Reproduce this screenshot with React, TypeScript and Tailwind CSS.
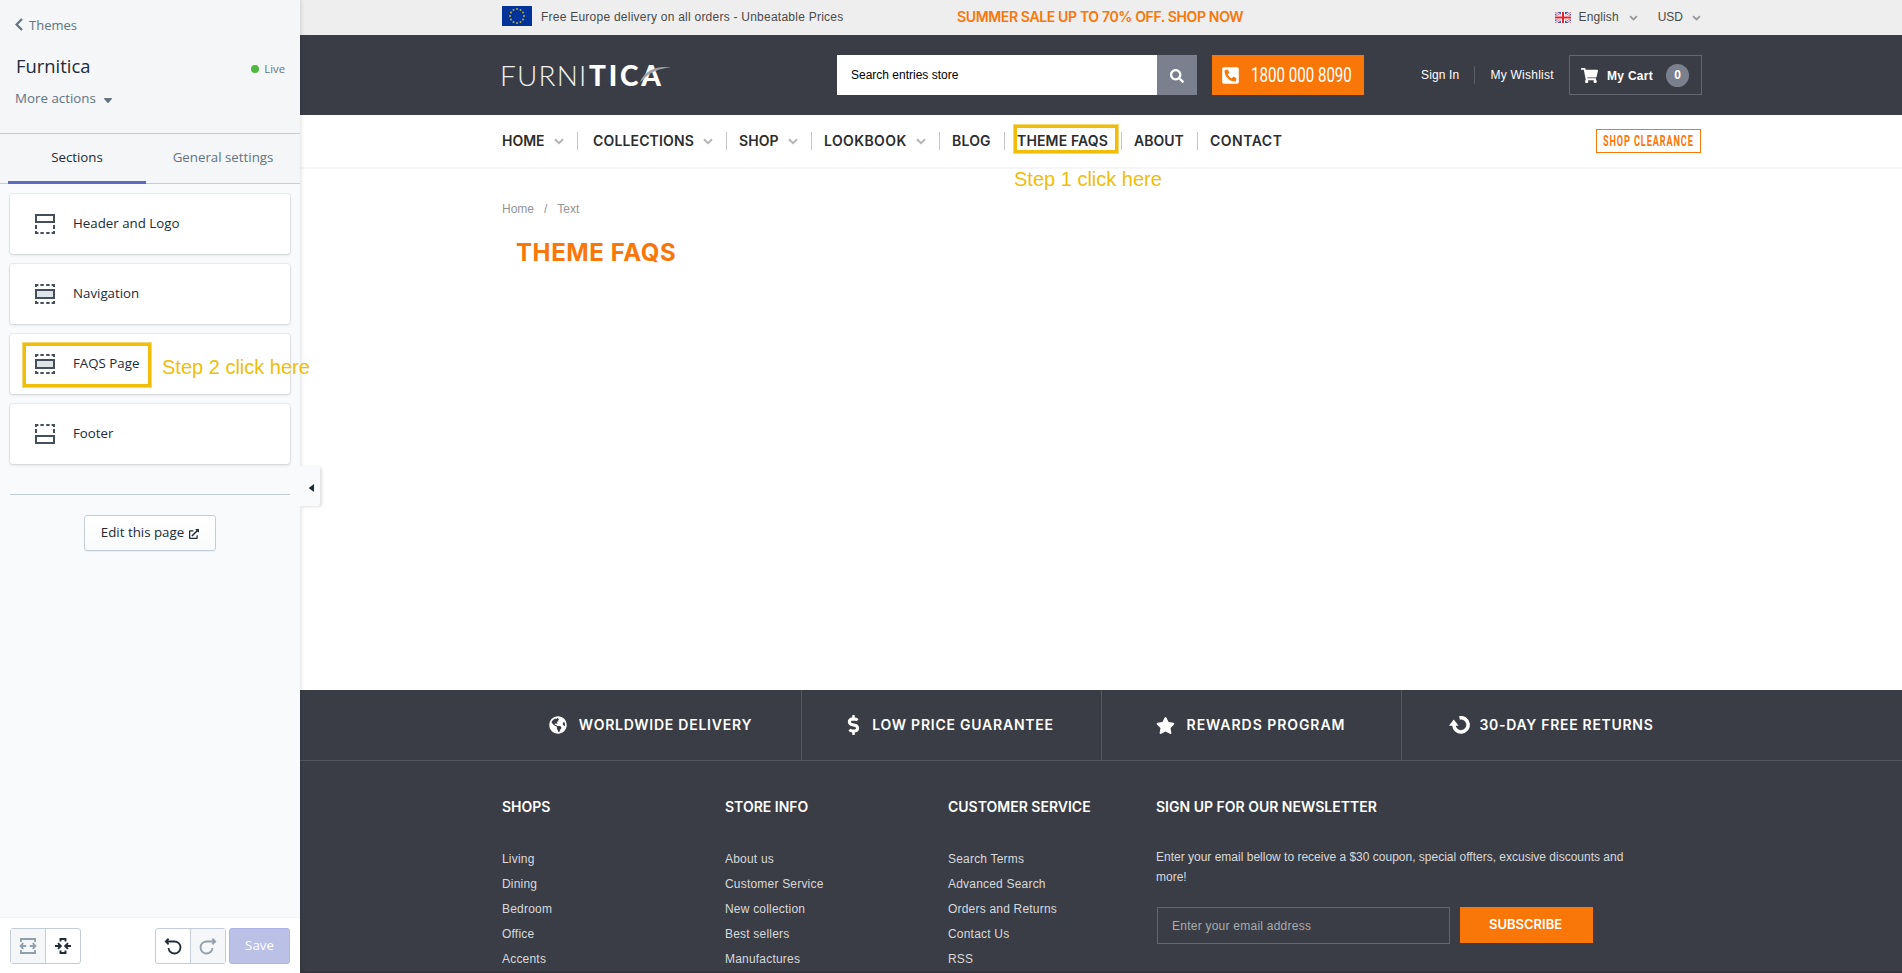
import type { ReactNode } from "react";
import {
  FaDollarSign,
  FaExternalLinkAlt,
  FaGlobeAmericas,
  FaPhoneSquareAlt,
  FaSearch,
  FaShoppingCart,
  FaStar,
} from "react-icons/fa";

function Chevron({ className }: { className: string }) {
  return (
    <svg viewBox="0 0 10 7" className={className} fill="none" stroke="currentColor" strokeWidth="2">
      <path d="M1 1.2 5 5.2 9 1.2" />
    </svg>
  );
}

/* ---------- editor sidebar ---------- */

type SectionKind = "header" | "body" | "footer";

function SectionIcon({ kind }: { kind: SectionKind }) {
  return (
    <svg viewBox="0 0 20 20" className="size-5 text-[#454f5b]" fill="none" stroke="currentColor" strokeWidth="2">
      {kind === "header" && (
        <>
          <rect x="1" y="1" width="18" height="7" />
          <path d="M1 11v4M19 11v4M1 17v2h2.4M5.4 19h3.4M11.2 19h3.4M16.6 19H19v-2" />
        </>
      )}
      {kind === "body" && (
        <>
          <rect x="1" y="6" width="18" height="8" fill="#dfe4e8" />
          <path d="M1 3V1h2.4M5.4 1h3.4M11.2 1h3.4M16.6 1H19v2M1 17v2h2.4M5.4 19h3.4M11.2 19h3.4M16.6 19H19v-2" />
        </>
      )}
      {kind === "footer" && (
        <>
          <rect x="1" y="12" width="18" height="7" />
          <path d="M1 9V5M19 9V5M1 3V1h2.4M5.4 1h3.4M11.2 1h3.4M16.6 1H19v2" />
        </>
      )}
    </svg>
  );
}

const sections: { label: string; kind: SectionKind }[] = [
  { label: "Header and Logo", kind: "header" },
  { label: "Navigation", kind: "body" },
  { label: "FAQS Page", kind: "body" },
  { label: "Footer", kind: "footer" },
];

function Sidebar() {
  return (
    <aside className="relative z-10 flex h-full w-[300px] shrink-0 flex-col bg-[#f9fafb] font-['Open_Sans',sans-serif] text-[13.3px] text-[#212b36] shadow-[0_0_5px_rgba(0,0,0,0.18)]">
      <div className="h-[134px] border-b border-[#c4cdd5] bg-[#f4f6f8] text-[#637381]">
        <div className="flex h-[50px] items-center pl-[15px]">
          <svg viewBox="0 0 8 13" className="mb-0.5 h-[13px] w-2" fill="none" stroke="currentColor" strokeWidth="2.2">
            <path d="M7 1 1.6 6.5 7 12" />
          </svg>
          <span className="ml-1.5 pt-0.5 text-[13px]">Themes</span>
        </div>
        <div className="flex h-8 items-center justify-between pr-[15px] pl-4">
          <span className="text-[18.4px] text-[#212b36]">Furnitica</span>
          <span className="flex items-center gap-[5px] pt-1.5 text-[11.3px]">
            <span className="size-2 rounded-full bg-[#50b83c]" />
            Live
          </span>
        </div>
        <div className="flex h-8 items-center gap-2 pt-0.5 pl-[15px]">
          <span className="tracking-[0.02px]">More actions</span>
          <svg viewBox="0 0 8 5" className="mt-0.5 h-[5px] w-2" fill="currentColor">
            <path d="M.3 0h7.4L8 .8 4.6 4.7a.8.8 0 0 1-1.2 0L0 .8z" />
          </svg>
        </div>
      </div>
      <div className="flex h-[50px] border-b border-[#c4cdd5] bg-[#f4f6f8] px-2">
        <div className="-mb-px flex w-[138px] items-center justify-center border-b-[3px] border-[#5c6ac4] pb-0">Sections</div>
        <div className="flex flex-1 items-center justify-center pl-2 pb-0.5 text-[#637381]">General settings</div>
      </div>
      <div className="flex flex-col gap-2.5 px-2.5 pt-2.5">
        {sections.map((s) => (
          <div
            key={s.label}
            className="flex h-[60px] items-center rounded-[3px] bg-white pl-[25px] shadow-[0_0_0_1px_rgba(63,63,68,0.06),0_1px_3px_rgba(63,63,68,0.18)]"
          >
            <SectionIcon kind={s.kind} />
            <span className="ml-[18px]">{s.label}</span>
          </div>
        ))}
      </div>
      <div className="mx-2.5 mt-[30px] border-t border-[#c4cdd5]" />
      <div className="mt-5 flex justify-center">
        <button className="flex h-9 w-[132px] items-center justify-center gap-[5px] rounded-[3px] border border-[#c4cdd5] bg-linear-to-b from-white to-[#f9fafb] shadow-[0_1px_0_rgba(22,29,37,0.05)]">
          Edit this page
          <FaExternalLinkAlt className="mt-0.5 size-2.5" />
        </button>
      </div>
      <div className="mt-auto flex h-14 items-center border-t border-[#f1f3f5] bg-white px-2.5">
        <div className="flex h-9 w-[71px] rounded-[3px] border border-[#c4cdd5]">
          <span className="flex w-[35px] items-center justify-center border-r border-[#c4cdd5] bg-[#f4f6f8] text-[#919eab]">
            <svg viewBox="0 0 18 18" className="size-[18px]" fill="none" stroke="currentColor" strokeWidth="1.8">
              <path d="M1.9 5V2h14.2v3M1.9 13v3h14.2v-3M1.5 9h5.7M10.8 9h5.7M4.3 6.2 1.5 9l2.8 2.8M13.7 6.2 16.5 9l-2.8 2.8" />
            </svg>
          </span>
          <span className="flex flex-1 items-center justify-center text-[#212b36]">
            <svg viewBox="0 0 18 18" className="size-[18px]" fill="none" stroke="currentColor" strokeWidth="1.9">
              <path d="M6.5 4.500V2h5v2.500M6.500 13.500V16h5v-2.500M1 9h5.300M17 9h-5.300M4 6.200 6.800 9 4 11.800M14 6.200 11.200 9l2.800 2.800" />
            </svg>
          </span>
        </div>
        <div className="ml-[74px] flex h-9 w-[71px] rounded-[3px] border border-[#c4cdd5]">
          <span className="flex w-[35px] items-center justify-center border-r border-[#c4cdd5] text-[#212b36]">
            <svg viewBox="0 0 18 18" className="size-[18px]" fill="none" stroke="currentColor" strokeWidth="1.8">
              <path d="M2 4.500h8.500a6 6 0 1 1-6 6.500M4.600 1.700 1.800 4.500l2.800 2.800" />
            </svg>
          </span>
          <span className="flex flex-1 items-center justify-center bg-[#f4f6f8] text-[#919eab]">
            <svg viewBox="0 0 18 18" className="size-[18px]" fill="none" stroke="currentColor" strokeWidth="1.8">
              <path d="M16 4.500H7.500a6 6 0 1 0 6 6.500M13.400 1.700l2.800 2.800-2.800 2.800" />
            </svg>
          </span>
        </div>
        <button className="ml-[3px] h-9 w-[61px] rounded-[3px] border border-[#aeb4e3] bg-[#bac0e6] font-medium text-white">
          Save
        </button>
      </div>
      <div className="absolute top-[466px] left-[300px] flex h-10 w-5 items-center justify-center rounded-r-[3px] bg-[#f9fafb] pl-[3px] shadow-[2px_1px_3px_rgba(0,0,0,0.12)]">
        <svg viewBox="0 0 5 8" className="mt-1 h-2 w-[5px]" fill="#212b36">
          <path d="M5 0v8L.3 4.600a.8.8 0 0 1 0-1.200z" />
        </svg>
      </div>
    </aside>
  );
}

/* ---------- storefront ---------- */

function Container({ className, children }: { className: string; children: ReactNode }) {
  return <div className={`ml-[202px] flex w-[1200px] ${className}`}>{children}</div>;
}

const stars = Array.from({ length: 12 }, (_, i) => {
  const a = (i * Math.PI) / 6;
  return { x: 15 + 7 * Math.sin(a), y: 10 - 7 * Math.cos(a) };
});

function EuFlag() {
  return (
    <svg viewBox="0 0 30 20" className="h-5 w-[30px]">
      <rect width="30" height="20" rx="0.5" fill="#039" />
      {stars.map((s, i) => (
        <rect key={i} x={s.x - 0.8} y={s.y - 0.8} width="1.6" height="1.6" fill="#d9c41c" />
      ))}
    </svg>
  );
}

function UkFlag() {
  return (
    <svg viewBox="0 0 16 11" className="h-[11px] w-4">
      <rect width="16" height="11" fill="#3c5aa8" />
      <path d="M0 0 16 11M16 0 0 11" stroke="#fff" strokeWidth="2.4" />
      <path d="M0 0 16 11M16 0 0 11" stroke="#e0566a" strokeWidth="0.9" />
      <path d="M8 0v11M0 5.5h16" stroke="#fff" strokeWidth="4" />
      <path d="M8 0v11M0 5.5h16" stroke="#e8222e" strokeWidth="2" />
    </svg>
  );
}

function Logo() {
  return (
    <div className="relative flex w-[169px] items-center leading-none text-white">
      <span className="-ml-0.5 w-[89px] font-['Lato',sans-serif] text-[28px] font-light tracking-[1.2px] text-[#f0f1f2]">FURNI</span>
      <span className="font-['Lato',sans-serif] text-[28px] font-black tracking-[2.8px]">TICA</span>
      <svg viewBox="0 0 34 20" className="absolute top-[3px] right-0 h-5 w-[34px]">
        <path d="M3 18C7 8 17 1.5 34 3.3 22 4.5 14 8.5 10 12 7 14.6 5 17 3 18z" fill="#9ea1a7" />
      </svg>
    </div>
  );
}

const nav = [
  { label: "HOME", menu: true, box: "w-[91px]", gap: "mr-[15px]", text: "tracking-[0px]" },
  { label: "COLLECTIONS", menu: true, box: "w-[146px]", gap: "mr-3", text: "tracking-[0.15px]" },
  { label: "SHOP", menu: true, box: "w-[85px]", gap: "mr-3", text: "tracking-[0.1px]" },
  { label: "LOOKBOOK", menu: true, box: "w-[128px]", gap: "mr-3", text: "tracking-[0.4px]" },
  { label: "BLOG", menu: false, box: "w-[65px]", gap: "mr-3", text: "tracking-[0.2px]" },
  { label: "THEME FAQS", menu: false, box: "w-[117px]", gap: "mr-3", text: "tracking-[0.15px]" },
  { label: "ABOUT", menu: false, box: "w-[76px]", gap: "mr-3", text: "" },
  { label: "CONTACT", menu: false, box: "w-[76px]", gap: "", text: "tracking-[0.5px]" },
];

function StoreHeader() {
  return (
    <header>
      <div className="h-[35px] bg-[#eee] text-xs text-[#4a4a4a]">
        <Container className="h-[34px] items-center">
          <span className="mb-2 block h-5 pt-[3px]">
            <EuFlag />
          </span>
          <span className="ml-[9px] w-[416px] tracking-[0.24px]">Free Europe delivery on all orders - Unbeatable Prices</span>
          <span className="font-['Inter',sans-serif] text-sm font-semibold tracking-[-0.36px] text-[#f97609]">
            SUMMER SALE UP TO 70% OFF. SHOP NOW
          </span>
          <span className="ml-auto flex items-center pr-px">
            <UkFlag />
            <span className="ml-2 tracking-[0.1px]">English</span>
            <Chevron className="mt-0.5 ml-[10px] h-1.5 w-[9px] text-[#999]" />
            <span className="ml-5">USD</span>
            <Chevron className="mt-0.5 ml-[9px] h-1.5 w-[9px] text-[#999]" />
          </span>
        </Container>
      </div>
      <div className="h-20 bg-[#3a3d45] text-xs text-white">
        <Container className="h-20 items-center">
          <Logo />
          <div className="ml-[166px] flex h-10 w-80 items-center bg-white pl-3.5 text-black">Search entries store</div>
          <div className="flex size-10 items-center justify-center bg-[#7b808e]">
            <FaSearch className="mt-0.5 size-3.5" />
          </div>
          <div className="ml-[15px] flex h-10 w-[152px] items-center bg-[#f97609] pl-[9px]">
            <FaPhoneSquareAlt className="size-[19px]" />
            <span className="ml-[11px] w-[102px] origin-left scale-x-[0.755] font-['Roboto',sans-serif] text-[20px] whitespace-nowrap">
              1800 000 8090
            </span>
          </div>
          <span className="ml-[57px] tracking-[0.15px]">Sign In</span>
          <span className="ml-[15px] h-[18px] w-px bg-[#5b5e66]" />
          <span className="ml-[15px] tracking-[0.25px]">My Wishlist</span>
          <div className="ml-auto flex h-10 w-[133px] items-center border border-[#63666e] pl-[11px]">
            <FaShoppingCart className="size-[17px]" />
            <span className="ml-[9px] pt-px font-bold tracking-[0.3px]">My Cart</span>
            <span className="ml-[13px] flex size-[23px] items-center justify-center rounded-full bg-[#7b808e] font-bold">0</span>
          </div>
        </Container>
      </div>
      <nav className="h-[54px] border-b-2 border-[#f6f6f6] bg-white font-['Inter',sans-serif] text-sm font-semibold text-[#2d2d2d]">
        <Container className="h-[52px] items-center">
          {nav.map((n, i) => (
            <div key={n.label} className={`flex items-center ${n.box}`}>
              <span className={`whitespace-nowrap ${n.text}`}>{n.label}</span>
              {n.menu && <Chevron className="ml-[9px] h-[7px] w-2.5 text-[#b5b5b5]" />}
              {i < nav.length - 1 && <span className={`ml-auto h-[18px] w-px bg-[#c4c4c4] ${n.gap}`} />}
            </div>
          ))}
          <div className="mr-px ml-auto h-6 w-[105px] border border-[#f97609] pl-1.5 font-['Roboto',sans-serif] leading-[22px] font-bold text-[#f97609]">
            <span className="inline-block origin-left scale-x-[0.65] tracking-[1.4px] whitespace-nowrap">SHOP CLEARANCE</span>
          </div>
        </Container>
      </nav>
    </header>
  );
}

function ReturnIcon() {
  return (
    <svg viewBox="0 0 21 18" className="h-[18px] w-[21px]" fill="none">
      <path d="M10.5 1.900A7.100 7.100 0 1 1 4.900 9" stroke="currentColor" strokeWidth="3.600" />
      <path d="M0 9.800 4.800 3.600 9.600 9.800z" fill="currentColor" />
    </svg>
  );
}

const perks = [
  { label: "WORLDWIDE DELIVERY", icon: <FaGlobeAmericas className="size-[18px]" />, text: "tracking-[0.75px]" },
  { label: "LOW PRICE GUARANTEE", icon: <FaDollarSign className="h-5 w-[13px]" />, text: "tracking-[0.77px]" },
  { label: "REWARDS PROGRAM", icon: <FaStar className="size-[19px]" />, text: "tracking-[0.95px]" },
  { label: "30-DAY FREE RETURNS", icon: <ReturnIcon />, text: "-ml-0.5 tracking-[0.7px]" },
];

const columns = [
  { title: "SHOPS", width: "w-[223px]", links: ["Living", "Dining", "Bedroom", "Office", "Accents"] },
  {
    title: "STORE INFO",
    width: "w-[223px]",
    links: ["About us", "Customer Service", "New collection", "Best sellers", "Manufactures"],
  },
  {
    title: "CUSTOMER SERVICE",
    width: "w-[208px]",
    links: ["Search Terms", "Advanced Search", "Orders and Returns", "Contact Us", "RSS"],
  },
];

function Heading({ children }: { children: ReactNode }) {
  return <h3 className="h-6 font-['Inter',sans-serif] text-sm leading-6 font-semibold text-white">{children}</h3>;
}

function StoreFooter() {
  return (
    <footer className="mt-auto h-[283px] overflow-hidden border-b-2 border-[#35343f] bg-[#3a3d45] text-xs text-[#d9d9db]">
      <div className="border-b border-[#555966]">
        <Container className="h-[70px]">
          {perks.map((p, i) => (
            <div
              key={p.label}
              className={`flex w-[300px] items-center justify-center gap-3 pr-0.5 font-['Inter',sans-serif] text-sm font-semibold text-white ${i < 3 ? "border-r border-[#555966]" : ""}`}
            >
              {p.icon}
              <span className={p.text}>{p.label}</span>
            </div>
          ))}
        </Container>
      </div>
      <Container className="pt-[34px]">
        {columns.map((c) => (
          <div key={c.title} className={c.width}>
            <Heading>{c.title}</Heading>
            <ul className="mt-7 leading-[25px] tracking-[0.2px]">
              {c.links.map((l) => (
                <li key={l}>{l}</li>
              ))}
            </ul>
          </div>
        ))}
        <div className="flex-1">
          <Heading>SIGN UP FOR OUR NEWSLETTER</Heading>
          <p className="mt-7 w-[480px] leading-5">
            Enter your email bellow to receive a $30 coupon, special offters, excusive discounts and more!
          </p>
          <div className="mt-5 flex gap-2.5 pl-px">
            <div className="flex h-[37px] w-[293px] items-center border border-[#63666e] pl-[14px] tracking-[0.24px] text-[#a9abaf]">
              Enter your email address
            </div>
            <button className="h-9 w-[133px] bg-[#f97609] pr-0.5 font-['Inter',sans-serif] text-[13px] font-semibold text-white">
              SUBSCRIBE
            </button>
          </div>
        </div>
      </Container>
    </footer>
  );
}

function StoreFront() {
  return (
    <div className="flex h-full flex-1 flex-col bg-white">
      <StoreHeader />
      <Container className="flex-col">
        <div className="mt-[30px] flex h-5 items-center gap-2.5 text-xs text-[#949494]">
          <span>Home</span>
          <span>/</span>
          <span>Text</span>
        </div>
        <h1 className="mt-3.5 ml-3.5 font-['Inter',sans-serif] text-2xl leading-10 font-bold tracking-[0.6px] text-[#f97609]">
          THEME FAQS
        </h1>
      </Container>
      <StoreFooter />
    </div>
  );
}

/* ---------- tutorial annotations ---------- */

function Annotations() {
  const frame = "absolute border-[3px] border-[#f0bd08] outline outline-[#f5d876]";
  return (
    <div className="pointer-events-none absolute inset-0 z-20 text-xl leading-6 text-[#f0bd08]">
      <div className={`${frame} top-[125px] left-[1014px] h-7 w-[104px]`} />
      <div className="absolute top-[167px] left-[1014px]">Step 1 click here</div>
      <div className={`${frame} top-[343px] left-[23px] h-11 w-32`} />
      <div className="absolute top-[355px] left-[162px]">Step 2 click here</div>
    </div>
  );
}

export default function App() {
  return (
    <div className="relative flex h-[973px] w-[1902px] overflow-hidden font-['Liberation_Sans',Arial,sans-serif]">
      <Sidebar />
      <StoreFront />
      <Annotations />
    </div>
  );
}
